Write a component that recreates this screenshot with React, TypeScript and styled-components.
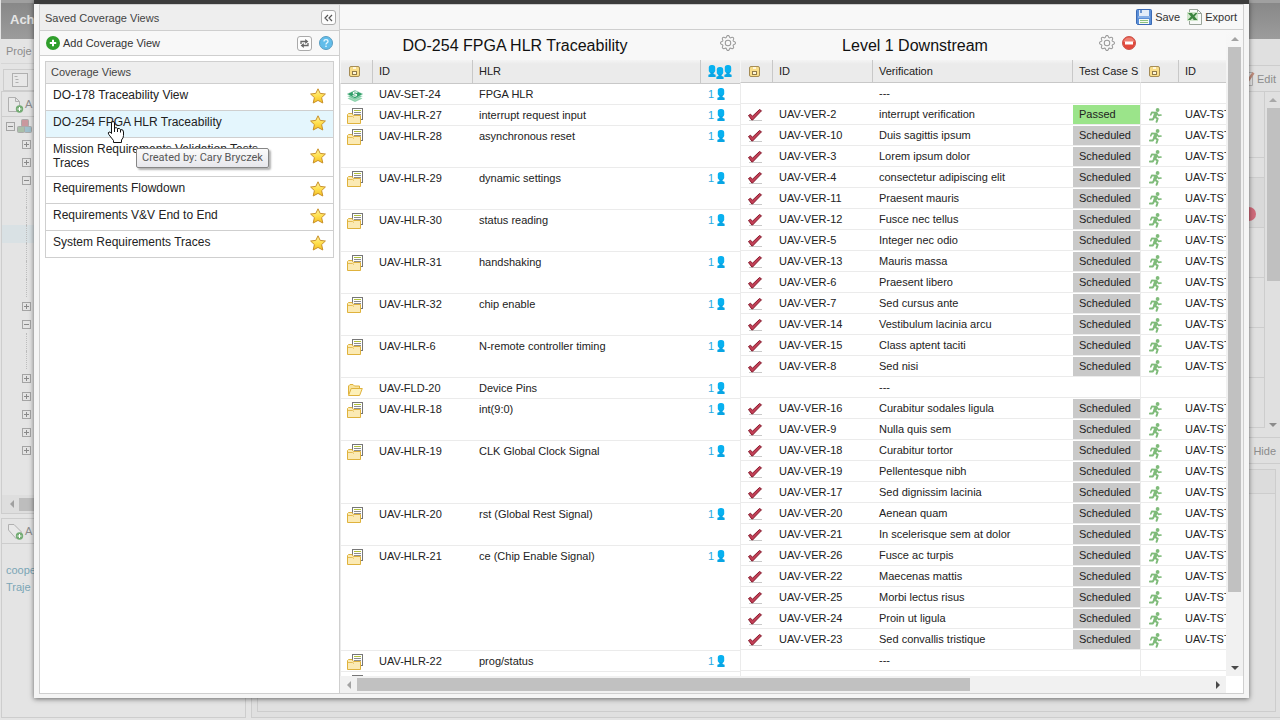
import React from "react";
import styled, { createGlobalStyle } from "styled-components";
import { BsGear } from "react-icons/bs";

const GlobalStyle = createGlobalStyle`
  *, *::before, *::after { box-sizing: border-box; }
  body {
    margin: 0;
    background: #e4e4e4;
    color: #222;
    font-family: "Liberation Sans", Arial, sans-serif;
    font-size: 11px;
    line-height: 14px;
  }
  button {
    margin: 0;
    padding: 0;
    border: 0;
    background: none;
    color: inherit;
    font: inherit;
    text-align: left;
  }
  svg { display: block; flex: none; }
`;

const rule = "#cfcfcf";
const faint = "#cdcdcd";

/* ---------- application behind the dialog ---------- */

const Page = styled.div`
  position: relative;
  display: flex;
  flex-direction: column;
  height: 100vh;
  min-height: 480px;
  overflow: hidden;
`;

const Banner = styled.header`
  flex: none;
  height: 39px;
  margin-left: 1px;
  padding: 13px 0 0 9px;
  background: linear-gradient(#a0a0a0, #a0a0a0 3px, #888 3px, #9c9c9c);
  color: #e6e6e6;
  font-size: 13px;
  font-weight: bold;
`;

const Workspace = styled.div`
  flex: 1;
  display: flex;
  gap: 5px;
  min-height: 0;
  padding: 0 0 2px 1px;
  color: #8c8c8c;
`;

const NavColumn = styled.div`
  flex: none;
  display: flex;
  flex-direction: column;
  width: 245px;
`;

const NavTitle = styled.div`
  flex: none;
  height: 25px;
  margin-bottom: 5px;
  padding: 5px;
  border-bottom: 1px solid #d6d6d6;
`;

const NavTab = styled.div`
  flex: none;
  height: 22px;
  margin-left: 2px;
  padding: 3px 8px;
  border: 1px solid ${faint};
`;

const NavPanel = styled.section<{ $fixed?: boolean }>`
  display: flex;
  flex-direction: column;
  flex: ${(p) => (p.$fixed ? "0 0 200px" : "1 1 0")};
  min-height: 0;
  margin-bottom: ${(p) => (p.$fixed ? "0" : "4px")};
  border: 1px solid ${faint};
  overflow: hidden;
`;

const NavTools = styled.div`
  flex: none;
  display: flex;
  align-items: center;
  gap: 1px;
  height: 25px;
  padding-left: 5px;
  border-bottom: 1px solid ${faint};
`;

const Tree = styled.ul`
  flex: 1;
  min-height: 0;
  margin: 0;
  padding: 0;
  list-style: none;
  overflow: hidden;
`;

const TreeRow = styled.li<{ $root?: boolean; $lit?: boolean }>`
  display: flex;
  align-items: center;
  gap: 2px;
  height: 18px;
  padding-left: ${(p) => (p.$root ? "4px" : "20px")};
  background: ${(p) => (p.$lit ? "#d9e1e4" : "transparent")};
`;

const Expander = styled.button<{ $open?: boolean }>`
  position: relative;
  width: 9px;
  height: 9px;
  border: 1px solid #a4a4a4;
  &::before, &::after {
    content: "";
    position: absolute;
    background: #8a8a8a;
  }
  &::before { left: 1px; top: 3px; width: 5px; height: 1px; }
  &::after { left: 3px; top: 1px; width: 1px; height: ${(p) => (p.$open ? "0" : "5px")}; }
`;

const TreeLine = styled.span`
  width: 1px;
  height: 18px;
  margin-left: 4px;
  border-left: 1px dotted #bcbcbc;
`;

const NavScroll = styled.div`
  flex: none;
  display: flex;
  align-items: center;
  gap: 3px;
  height: 18px;
  padding-left: 6px;
  background: #dedede;
  &::after { content: ""; flex: 1; height: 13px; background: #bdbdbd; }
`;

const TagLinks = styled.nav`
  display: flex;
  flex-direction: column;
  gap: 3px;
  padding: 19px 4px;
  a { color: #7ba6b6; text-decoration: none; }
`;

const DetailColumn = styled.div`
  flex: 1;
  display: flex;
  flex-direction: column;
  min-width: 0;
  border: 1px solid ${faint};
  border-width: 0 0 1px 1px;
  background: #e0e0e0;
`;

const DetailTools = styled.div`
  flex: none;
  display: flex;
  align-items: center;
  justify-content: flex-end;
  height: 26px;
  padding-right: 4px;
  border-bottom: 1px solid ${faint};
`;

const DetailSpacer = styled.div`
  flex: none;
  height: 27px;
  border-bottom: 1px solid ${faint};
`;

const DetailScroll = styled.div`
  flex: none;
  display: flex;
  height: 346px;
  border-bottom: 1px solid ${faint};
`;

const Activity = styled.div`
  flex: 1;
  display: flex;
  flex-direction: column;
`;

const ActivityRow = styled.div<{ $height: number; $lit?: boolean }>`
  display: flex;
  align-items: flex-end;
  justify-content: flex-end;
  height: ${(p) => p.$height}px;
  padding: 0 8px 6px 0;
  border-bottom: 1px solid ${faint};
  border-right: 1px solid ${faint};
  background: ${(p) => (p.$lit ? "#d9d9d9" : "transparent")};
`;

const ActivityDot = styled.span`
  width: 14px;
  height: 14px;
  border-radius: 7px;
  background: #cf6a7a;
`;

const ActivityBar = styled.div`
  flex: none;
  display: flex;
  flex-direction: column;
  align-items: center;
  width: 15px;
  padding: 4px 0 8px;
  &::before {
    content: "";
    order: 1;
    width: 13px;
    height: 173px;
    margin: 4px 0 auto 1px;
    background: #c0c0c0;
  }
  svg:last-child { order: 2; }
`;

const CommentBox = styled.div`
  flex: 1;
  margin: 5px 4px 5px 5px;
  border: 1px solid ${faint};
  &::before {
    content: "";
    display: block;
    height: 24px;
    border-bottom: 1px solid ${faint};
    background: #dcdcdc;
  }
`;

const FadedButton = styled.button`
  color: #8c8c8c;
`;

/* ---------- dialog ---------- */

const Dialog = styled.div`
  position: absolute;
  inset: 0 31px 22px 34px;
  display: flex;
  border-top: 4px solid #3c3c3c;
  padding: 0 5px 4px;
  background: #f5f5f5;
  box-shadow: 0 1px 5px rgba(0, 0, 0, 0.55);
`;

const Sidebar = styled.aside`
  flex: none;
  width: 301px;
  border: 1px solid ${rule};
  background: #fff;
`;

const Bar = styled.div<{ $height: number; $heading?: boolean }>`
  flex: none;
  display: flex;
  align-items: center;
  gap: 7px;
  height: ${(p) => p.$height}px;
  padding: ${(p) => (p.$heading ? "0 3px 0 5px" : "0 6px")};
  border-bottom: 1px solid ${rule};
  background: ${(p) => (p.$heading ? "#eee" : "#f8f8f8")};
`;

const BarTitle = styled.h2`
  flex: 1;
  margin: 0;
  font-size: 11px;
  font-weight: normal;
  color: #444;
`;

const SquareButton = styled.button`
  display: flex;
  align-items: center;
  justify-content: center;
  width: 15px;
  height: 15px;
  border: 1px solid #aaa;
  border-radius: 3px;
  background: #fdfdfd;
`;

const TextButton = styled.button<{ $grow?: boolean }>`
  flex: ${(p) => (p.$grow ? "1" : "none")};
  display: flex;
  align-items: center;
  gap: 3px;
  color: #333;
`;

const ViewBox = styled.section`
  margin: 5px;
  border: 1px solid ${rule};
`;

const ViewHeading = styled.h3`
  height: 22px;
  margin: 0;
  padding: 3px 5px;
  border-bottom: 1px solid ${rule};
  background: #eee;
  font-size: 11px;
  font-weight: normal;
  color: #444;
`;

const ViewList = styled.ul`
  margin: 0;
  padding: 0;
  list-style: none;
  li + li { border-top: 1px solid ${rule}; }
`;

const ViewItem = styled.button<{ $active?: boolean }>`
  display: flex;
  align-items: center;
  width: 100%;
  padding: 4px 7px 6px;
  background: ${(p) => (p.$active ? "#e4f6fd" : "#fff")};
  font-size: 12px;
`;

const ViewName = styled.span`
  flex: 1;
  align-self: flex-start;
  padding-right: 32px;
`;

const Main = styled.main`
  flex: 1;
  display: flex;
  flex-direction: column;
  min-width: 0;
  border: 1px solid ${rule};
  border-left: 0;
  background: #fff;
`;

const MainBar = styled(Bar)`
  justify-content: flex-end;
`;

const ScrollFrame = styled.div`
  flex: 1;
  display: grid;
  grid-template-columns: minmax(0, 1fr) 17px;
  grid-template-rows: minmax(0, 1fr) 17px;
  min-height: 0;
`;

const Viewport = styled.div`
  display: flex;
  align-items: flex-start;
  overflow: hidden;
`;

const ScrollColumn = styled.div`
  display: flex;
  flex-direction: column;
  align-items: center;
  background: linear-gradient(#f8f8f8, #f1f1f1 60px);
`;

const ScrollRow = styled.div`
  display: flex;
  align-items: center;
  background: #f1f1f1;
`;

const ArrowButton = styled.button`
  flex: none;
  display: flex;
  align-items: center;
  justify-content: center;
  width: 17px;
  height: 17px;
`;

const TrackY = styled.div`
  flex: 1;
  width: 13px;
  &::before { content: ""; display: block; height: 89%; background: #c1c1c1; }
`;

const TrackX = styled.div`
  flex: 1;
  height: 13px;
  &::before { content: ""; display: block; width: 72%; height: 13px; background: #c1c1c1; }
`;

const Level = styled.section`
  flex: none;
`;

const LevelHead = styled.div`
  display: flex;
  height: 30px;
  background: #f8f8f8;
`;

const LevelTitle = styled.h1`
  flex: 1;
  margin: 0;
  padding-top: 6px;
  font-size: 16px;
  line-height: 20px;
  font-weight: normal;
  text-align: center;
  color: #111;
`;

const LevelActions = styled.div`
  display: flex;
  justify-content: flex-end;
  align-items: center;
  gap: 7px;
  width: 50px;
  height: 26px;
  padding-right: 4px;
  color: #999;
`;

const Grid = styled.table<{ $first?: boolean }>`
  width: 400px;
  table-layout: fixed;
  border-collapse: separate;
  border-spacing: 0;
  th, td {
    padding: 0 0 0 6px;
    text-align: left;
    vertical-align: top;
    white-space: nowrap;
    overflow: hidden;
    line-height: 20px;
    font-weight: normal;
  }
  th {
    height: ${(p) => (p.$first ? "24px" : "23px")};
    border-right: 1px solid #c8c8c8;
    border-bottom: 1px solid #c8c8c8;
    background: linear-gradient(#f4f4f4, #ebebeb 4px);
    line-height: 22px;
  }
  th:last-child { border-right: 0; }
  td { border-bottom: 1px solid #ebebeb; }
  td:first-child { border-left: 1px solid #ebebeb; }
  th:first-child { border-left: 1px solid #f6f6f6; }
`;

const Row = styled.tr<{ $span?: number }>`
  height: ${(p) => (p.$span ?? 1) * 21}px;
`;

const IconSlot = styled.span<{ $head?: boolean }>`
  display: block;
  padding-top: ${(p) => (p.$head ? "4px" : "3px")};
  height: 20px;
`;

const People = styled.span`
  display: flex;
  align-items: center;
  gap: 3px;
  height: 20px;
  padding-left: 1px;
  color: #27a9e1;
`;

const PeopleHead = styled.span`
  display: flex;
  height: 22px;
  padding: 5px 0 0 1px;
  svg:nth-child(2) { margin-top: 2px; }
`;

const Status = styled.span<{ $passed?: boolean }>`
  display: block;
  height: 19px;
  margin: 1px 0 0 -6px;
  padding-left: 6px;
  background: ${(p) => (p.$passed ? "#9be48a" : "#c9c9c9")};
  line-height: 18px;
`;

const Tooltip = styled.div`
  position: absolute;
  left: 136px;
  top: 148px;
  height: 20px;
  padding: 2px 5px;
  border: 1px solid #868686;
  border-radius: 2px;
  background: linear-gradient(#fbfbfb, #e7e7ec);
  box-shadow: 2px 2px 2px rgba(0, 0, 0, 0.3);
  color: #575757;
  font-family: Roboto, sans-serif;
  font-size: 11px;
  white-space: nowrap;
`;

const Pointer = styled.svg`
  position: absolute;
  left: 106px;
  top: 120px;
  pointer-events: none;
`;

/* ---------- icons ---------- */

const Star = () => (
  <svg width="16" height="16" viewBox="0 0 16 16" aria-hidden="true">
    <defs>
      <linearGradient id="starFill" x1="0" y1="0" x2="0" y2="1">
        <stop offset="0" stopColor="#fff3a6" />
        <stop offset="0.5" stopColor="#ffe04f" />
        <stop offset="1" stopColor="#f5bf22" />
      </linearGradient>
    </defs>
    <path
      d="M8 0.8 L10.2 5.4 L15.4 6 L11.6 9.6 L12.8 15 L8 12.4 L3.2 15 L4.4 9.6 L0.6 6 L5.8 5.4 Z"
      fill="url(#starFill)"
      stroke="#c9912a"
      strokeLinejoin="round"
    />
  </svg>
);

const AddCircle = () => (
  <svg width="14" height="14" viewBox="0 0 14 14" aria-hidden="true">
    <circle cx="7" cy="7" r="7" fill="#2f9e2b" />
    <path d="M7 3.8 V10.2 M3.8 7 H10.2" stroke="#fff" strokeWidth="2" />
  </svg>
);

const HelpCircle = () => (
  <svg width="14" height="14" viewBox="0 0 14 14" aria-hidden="true">
    <circle cx="7" cy="7" r="6.5" fill="#62bdea" stroke="#5a9cc0" />
    <path d="M5 5.4 C5 3 9 3 9 5.4 C9 6.8 7 6.8 7 8.6" fill="none" stroke="#e8f7ff" strokeWidth="1.3" />
    <rect x="6.3" y="9.6" width="1.4" height="1.4" fill="#e8f7ff" />
  </svg>
);

const Chevrons = () => (
  <svg width="9" height="8" viewBox="0 0 9 8" aria-hidden="true">
    <path d="M4 1 L1 4 L4 7 M8 1 L5 4 L8 7" fill="none" stroke="#555" strokeWidth="1.2" />
  </svg>
);

const Swap = () => (
  <svg width="9" height="9" viewBox="0 0 9 9" aria-hidden="true">
    <path d="M1 5 V2.5 H6 M8 4 V6.5 H3" fill="none" stroke="#666" strokeWidth="1.3" />
    <path d="M5.2 0 L8.4 2.5 L5.2 5 Z M3.8 4 L0.6 6.5 L3.8 9 Z" fill="#666" />
  </svg>
);

const Floppy = () => (
  <svg width="16" height="16" viewBox="0 0 16 16" aria-hidden="true">
    <path d="M0.5 1.5 Q0.5 0.5 1.5 0.5 H14.5 Q15.5 0.5 15.5 1.5 V15.5 H1.5 L0.5 14.5 Z" fill="#5b8fd8" stroke="#3a6ab5" />
    <rect x="3" y="1" width="10" height="6" fill="#e3ecf8" />
    <rect x="4" y="1" width="2" height="3" fill="#6b94cf" />
    <rect x="2" y="7" width="12" height="2" fill="#86aee6" />
    <rect x="3" y="10" width="10" height="5" fill="#f7fbf4" />
    <path d="M4 11.5 H12 M4 13.5 H12" stroke="#8cc27e" />
  </svg>
);

const Sheet = () => (
  <svg width="15" height="16" viewBox="0 0 15 16" aria-hidden="true">
    <path d="M2.5 0.5 H10.5 L14.5 4.5 V15.5 H2.5 Z" fill="#f8faf8" stroke="#9aa59a" />
    <path d="M10.5 0.5 V4.5 H14.5" fill="none" stroke="#9aa59a" />
    <rect x="0" y="3" width="11" height="9" fill="#cfe5ca" />
    <path d="M1 4 H5 L6.2 6 L8.5 4 H10.5 L7.5 7.5 L10.5 11 H6.8 L5.4 9.2 L3.5 11 H0.8 L4 7.6 Z" fill="#3c8540" />
  </svg>
);

const RemoveCircle = () => (
  <svg width="14" height="14" viewBox="0 0 14 14" aria-hidden="true">
    <circle cx="7" cy="7" r="6.5" fill="#e2493c" stroke="#c9564c" />
    <path d="M1.5 6 A5.6 5.6 0 0 1 12.5 6 Z" fill="#ee7f72" />
    <rect x="3" y="5.5" width="8" height="3" fill="#fff" />
  </svg>
);

const TypeBadge = () => (
  <svg width="16" height="16" viewBox="0 0 16 16" aria-hidden="true">
    <rect x="2.5" y="2.5" width="10" height="10" rx="1.5" fill="#f9dd88" stroke="#a58c55" />
    <rect x="6" y="3" width="3" height="2" fill="#fff7dc" />
    <rect x="5.5" y="7.5" width="4" height="3" fill="#fff7dc" stroke="#8e7a4c" />
  </svg>
);

const RequirementIcon = () => (
  <svg width="16" height="16" viewBox="0 0 16 16" aria-hidden="true">
    <rect x="5.5" y="0.5" width="10" height="11" fill="#fff" stroke="#777" />
    <path d="M7 2.5 H14" stroke="#b2c23a" />
    <path d="M7 4.5 H14 M7 6.5 H14 M10 8.5 H14" stroke="#8c8c8c" />
    <path d="M0.5 15.5 V6.5 L1.5 5.5 H5 L6.5 7.5 H13.5 V15.5 Z" fill="#fbeab4" stroke="#dfb23c" />
    <path d="M1 8.5 H5.5 L7 9.5" fill="none" stroke="#e5bd52" />
  </svg>
);

const SetIcon = () => (
  <svg width="16" height="16" viewBox="0 0 16 16" aria-hidden="true">
    <path d="M0.5 11.5 L8 15 L15.5 11.5 L8 8.5 Z" fill="#8fd3ad" />
    <path d="M0.5 9.3 L8 13 L15.5 9.3 L8 6.5 Z" fill="#6cc596" stroke="#d7f0e2" strokeWidth="0.5" />
    <path d="M0 7 L8 11.6 L16 7 L8 3.2 Z" fill="#2f9e67" stroke="#d7f0e2" strokeWidth="0.4" />
    <path d="M10.4 5.4 C8.6 4.4 5.8 5 6.4 6.4 C7 7.6 9.8 6.8 9.6 8.2 C9.2 9.6 7 9.2 5.6 8.4" fill="none" stroke="#fff" strokeWidth="1.2" />
  </svg>
);

const FolderIcon = () => (
  <svg width="16" height="16" viewBox="0 0 16 16" aria-hidden="true">
    <path d="M1.5 13.5 V5 L3 3.5 H6 L7.5 5 H12.5 V7.5" fill="#f8e39c" stroke="#dfb23c" />
    <path d="M1.5 14.5 L4.2 7.5 H15.3 L12.6 14.5 Z" fill="#fdf0b8" stroke="#dfb23c" strokeLinejoin="round" />
  </svg>
);

const CheckIcon = () => (
  <svg width="16" height="16" viewBox="0 0 16 16" aria-hidden="true">
    <path d="M2 13.5 H15" stroke="#c9c9c9" />
    <path d="M1.5 8.5 L3.5 7.2 L5.5 9.2 L12.5 2.5 L14.5 3.8 L5.6 13 L4.8 13 Z" fill="#c23f56" stroke="#851a2c" strokeLinejoin="round" />
  </svg>
);

const RunnerIcon = () => (
  <svg width="16" height="16" viewBox="0 0 16 16" aria-hidden="true">
    <circle cx="10.6" cy="3" r="1.9" fill="#7fbb7a" />
    <g fill="none" stroke="#7fbb7a" strokeLinecap="round" strokeLinejoin="round">
      <path d="M9 6.4 L7.8 9.4" strokeWidth="3.4" />
      <path d="M10.2 6.6 L11.4 8.4 L14 8 M8.4 5.6 L4.8 5.4 L3.8 7.8" strokeWidth="1.6" />
      <path d="M8.2 10 L10.6 11.6 L9.6 14.8 M7.2 10 L5.8 12.4 L3 12.6" strokeWidth="2" />
    </g>
  </svg>
);

const Person = () => (
  <svg width="8" height="12" viewBox="0 0 8 12" aria-hidden="true">
    <rect x="0.8" y="0" width="6.4" height="8" rx="2.8" fill="#08b1f0" />
    <path d="M2.4 7 H5.6 V9 L7.6 9.8 V12 H0.4 V9.8 L2.4 9 Z" fill="#08a5e4" />
  </svg>
);

const Triangle = ({ turn = 0, tone = "#4a4a4a" }: { turn?: number; tone?: string }) => (
  <svg width="8" height="8" viewBox="0 0 8 8" aria-hidden="true">
    <path d="M0 6 L4 2 L8 6 Z" fill={tone} transform={`rotate(${turn} 4 4)`} />
  </svg>
);

const PageAdd = ({ tag = false }: { tag?: boolean }) => (
  <svg width="17" height="17" viewBox="0 0 17 17" aria-hidden="true">
    <path
      d={tag ? "M1.5 1.5 H7 L14.5 9 L9 15.5 L1.5 7 Z" : "M1.5 1.5 H8.5 L12.5 5.5 V15.5 H1.5 Z M8.5 1.5 V5.5 H12.5"}
      fill="#e9e9e9"
      stroke="#b0b0b0"
    />
    <circle cx="12.5" cy="13" r="3.7" fill="#74ac74" />
    <path d="M12.5 11 V15 M10.5 13 H14.5" stroke="#fff" />
  </svg>
);

const ListIcon = () => (
  <svg width="16" height="14" viewBox="0 0 16 14" aria-hidden="true">
    <rect x="0.5" y="0.5" width="15" height="13" fill="#e8e8e8" stroke="#b0b0b0" />
    <path d="M2.5 3.5 H5.5 M3.5 6.5 H6.5 M3.5 9.5 H6.5" stroke="#b0b0b0" />
  </svg>
);

const Blocks = () => (
  <svg width="15" height="15" viewBox="0 0 15 15" aria-hidden="true">
    <rect x="4.5" y="0.5" width="7" height="7" rx="1" fill="#c9989e" stroke="#aaa" />
    <rect x="0.5" y="7.5" width="7" height="6" rx="1" fill="#a9bfa9" stroke="#aaa" />
    <rect x="7.5" y="7.5" width="7" height="6" rx="1" fill="#9fbfcb" stroke="#aaa" />
  </svg>
);

const PencilPage = () => (
  <svg width="14" height="15" viewBox="0 0 14 15" aria-hidden="true">
    <path d="M0.5 1.5 H9.5 V14.5 H0.5 Z" fill="#e6e6e6" stroke="#b0b0b0" />
    <path d="M4 9 L9.5 1 L11.5 2.5 L6 10.5 Z" fill="#c08d7c" />
  </svg>
);

/* ---------- data ---------- */

const views = [
  "DO-178 Traceability View",
  "DO-254 FPGA HLR Traceability",
  "Mission Requirements Validation Tests Traces",
  "Requirements Flowdown",
  "Requirements V&V End to End",
  "System Requirements Traces",
];

type Kind = "set" | "folder" | "hlr";

const sources: { id: string; name: string; span: number; kind?: Kind }[] = [
  { id: "UAV-SET-24", name: "FPGA HLR", span: 1, kind: "set" },
  { id: "UAV-HLR-27", name: "interrupt request input", span: 1 },
  { id: "UAV-HLR-28", name: "asynchronous reset", span: 2 },
  { id: "UAV-HLR-29", name: "dynamic settings", span: 2 },
  { id: "UAV-HLR-30", name: "status reading", span: 2 },
  { id: "UAV-HLR-31", name: "handshaking", span: 2 },
  { id: "UAV-HLR-32", name: "chip enable", span: 2 },
  { id: "UAV-HLR-6", name: "N-remote controller timing", span: 2 },
  { id: "UAV-FLD-20", name: "Device Pins", span: 1, kind: "folder" },
  { id: "UAV-HLR-18", name: "int(9:0)", span: 2 },
  { id: "UAV-HLR-19", name: "CLK Global Clock Signal", span: 3 },
  { id: "UAV-HLR-20", name: "rst (Global Rest Signal)", span: 2 },
  { id: "UAV-HLR-21", name: "ce (Chip Enable Signal)", span: 5 },
  { id: "UAV-HLR-22", name: "prog/status", span: 1 },
  { id: "", name: "", span: 1 },
];

const verifications: ([string, string] | null)[] = [
  null,
  ["2", "interrupt verification"],
  ["10", "Duis sagittis ipsum"],
  ["3", "Lorem ipsum dolor"],
  ["4", "consectetur adipiscing elit"],
  ["11", "Praesent mauris"],
  ["12", "Fusce nec tellus"],
  ["5", "Integer nec odio"],
  ["13", "Mauris massa"],
  ["6", "Praesent libero"],
  ["7", "Sed cursus ante"],
  ["14", "Vestibulum lacinia arcu"],
  ["15", "Class aptent taciti"],
  ["8", "Sed nisi"],
  null,
  ["16", "Curabitur sodales ligula"],
  ["9", "Nulla quis sem"],
  ["18", "Curabitur tortor"],
  ["19", "Pellentesque nibh"],
  ["17", "Sed dignissim lacinia"],
  ["20", "Aenean quam"],
  ["21", "In scelerisque sem at dolor"],
  ["26", "Fusce ac turpis"],
  ["22", "Maecenas mattis"],
  ["25", "Morbi lectus risus"],
  ["24", "Proin ut ligula"],
  ["23", "Sed convallis tristique"],
  null,
];

/* "+" and "-" are expanders, "*" is the highlighted row, "" a plain guide line */
const treeRows = ["-", "+", "+", "-", "", "", "*", "", "", "", "+", "-", "", "", "+", "+", "+", "+", "+"];

const kindIcon: Record<Kind, React.ReactNode> = {
  set: <SetIcon />,
  folder: <FolderIcon />,
  hlr: <RequirementIcon />,
};

const TypeHead = () => (
  <th scope="col" aria-label="Type">
    <IconSlot $head><TypeBadge /></IconSlot>
  </th>
);

const Columns = ({ widths }: { widths: number[] }) => (
  <colgroup>
    {widths.map((w, i) => <col key={i} width={w} />)}
  </colgroup>
);

/* ---------- sections ---------- */

function Background() {
  return (
    <>
      <Banner>Ach</Banner>
      <Workspace>
        <NavColumn>
          <NavTitle>Proje</NavTitle>
          <NavTab><ListIcon /></NavTab>
          <NavPanel>
            <NavTools><PageAdd />A</NavTools>
            <Tree>
              {treeRows.map((mark, i) => (
                <TreeRow key={i} $root={i === 0} $lit={mark === "*"}>
                  {mark === "+" || mark === "-" ? (
                    <Expander $open={mark === "-"} aria-label={mark === "-" ? "Collapse" : "Expand"} />
                  ) : (
                    <TreeLine />
                  )}
                  {i === 0 && <Blocks />}
                </TreeRow>
              ))}
            </Tree>
            <NavScroll><Triangle turn={-90} tone="#a0a0a0" /></NavScroll>
          </NavPanel>
          <NavPanel $fixed>
            <NavTools><PageAdd tag />A</NavTools>
            <TagLinks>
              <a href="#coope">coope</a>
              <a href="#traje">Traje</a>
            </TagLinks>
          </NavPanel>
        </NavColumn>
        <DetailColumn>
          <DetailSpacer />
          <DetailTools><PencilPage /><FadedButton>Edit</FadedButton></DetailTools>
          <DetailScroll>
            <Activity>
              <ActivityRow $height={66} />
              <ActivityRow $height={20} />
              <ActivityRow $height={50} $lit><ActivityDot /></ActivityRow>
              <ActivityRow $height={50} />
              <ActivityRow $height={50} />
              <ActivityRow $height={50} />
              <ActivityRow $height={50} />
            </Activity>
            <ActivityBar>
              <Triangle tone="#a8a8a8" />
              <Triangle turn={180} tone="#8c8c8c" />
            </ActivityBar>
          </DetailScroll>
          <DetailTools><FadedButton>Hide</FadedButton></DetailTools>
          <CommentBox />
        </DetailColumn>
      </Workspace>
    </>
  );
}

function SavedViews() {
  return (
    <Sidebar>
      <Bar $heading $height={26}>
        <BarTitle>Saved Coverage Views</BarTitle>
        <SquareButton aria-label="Collapse panel"><Chevrons /></SquareButton>
      </Bar>
      <Bar $height={25}>
        <TextButton $grow><AddCircle />Add Coverage View</TextButton>
        <SquareButton aria-label="Refresh"><Swap /></SquareButton>
        <button aria-label="Help"><HelpCircle /></button>
      </Bar>
      <ViewBox>
        <ViewHeading>Coverage Views</ViewHeading>
        <ViewList>
          {views.map((name, i) => (
            <li key={name}>
              <ViewItem $active={i === 1}>
                <ViewName>{name}</ViewName>
                <Star />
              </ViewItem>
            </li>
          ))}
        </ViewList>
      </ViewBox>
    </Sidebar>
  );
}

function SourceLevel() {
  return (
    <Level>
      <LevelHead>
        <LevelTitle>DO-254 FPGA HLR Traceability</LevelTitle>
        <LevelActions>
          <button aria-label="Settings"><BsGear size={16} /></button>
        </LevelActions>
      </LevelHead>
      <Grid $first>
        <Columns widths={[33, 100, 228, 39]} />
        <thead>
          <tr>
            <TypeHead />
            <th scope="col">ID</th>
            <th scope="col">HLR</th>
            <th scope="col" aria-label="Users">
              <PeopleHead><Person /><Person /><Person /></PeopleHead>
            </th>
          </tr>
        </thead>
        <tbody>
          {sources.map((s, i) => (
            <Row key={i} $span={s.span}>
              <td><IconSlot>{kindIcon[s.kind ?? "hlr"]}</IconSlot></td>
              <td>{s.id}</td>
              <td>{s.name}</td>
              <td>{s.id && <People>1<Person /></People>}</td>
            </Row>
          ))}
        </tbody>
      </Grid>
    </Level>
  );
}

function DownstreamLevel() {
  return (
    <Level>
      <LevelHead>
        <LevelTitle>Level 1 Downstream</LevelTitle>
        <LevelActions>
          <button aria-label="Settings"><BsGear size={16} /></button>
          <button aria-label="Remove level"><RemoveCircle /></button>
        </LevelActions>
      </LevelHead>
      <Grid>
        <Columns widths={[33, 100, 200, 67]} />
        <thead>
          <tr>
            <TypeHead />
            <th scope="col">ID</th>
            <th scope="col">Verification</th>
            <th scope="col">Test Case S</th>
          </tr>
        </thead>
        <tbody>
          {verifications.map((v, i) => (
            <Row key={i}>
              <td>{v && <IconSlot><CheckIcon /></IconSlot>}</td>
              <td>{v && `UAV-VER-${v[0]}`}</td>
              <td>{v ? v[1] : "---"}</td>
              <td>{v && <Status $passed={i === 1}>{i === 1 ? "Passed" : "Scheduled"}</Status>}</td>
            </Row>
          ))}
          <Row><td /><td /><td /><td /></Row>
        </tbody>
      </Grid>
    </Level>
  );
}

function TestLevel() {
  return (
    <Level>
      <LevelHead />
      <Grid>
        <Columns widths={[39, 361]} />
        <thead>
          <tr>
            <TypeHead />
            <th scope="col">ID</th>
          </tr>
        </thead>
        <tbody>
          {verifications.map((v, i) => (
            <Row key={i}>
              <td>{v && <IconSlot><RunnerIcon /></IconSlot>}</td>
              <td>{v && "UAV-TST"}</td>
            </Row>
          ))}
          <Row><td /><td /></Row>
        </tbody>
      </Grid>
    </Level>
  );
}

export default function App() {
  return (
    <Page>
      <GlobalStyle />
      <Background />
      <Dialog role="dialog" aria-label="Coverage explorer">
        <SavedViews />
        <Main>
          <MainBar $height={25}>
            <TextButton><Floppy />Save</TextButton>
            <TextButton><Sheet />Export</TextButton>
          </MainBar>
          <ScrollFrame>
            <Viewport>
              <SourceLevel />
              <DownstreamLevel />
              <TestLevel />
            </Viewport>
            <ScrollColumn>
              <ArrowButton aria-label="Scroll up"><Triangle tone="#a3a3a3" /></ArrowButton>
              <TrackY />
              <ArrowButton aria-label="Scroll down"><Triangle turn={180} /></ArrowButton>
            </ScrollColumn>
            <ScrollRow>
              <ArrowButton aria-label="Scroll left"><Triangle turn={-90} tone="#a3a3a3" /></ArrowButton>
              <TrackX />
              <ArrowButton aria-label="Scroll right"><Triangle turn={90} /></ArrowButton>
            </ScrollRow>
          </ScrollFrame>
        </Main>
      </Dialog>
      <Tooltip role="tooltip">Created by: Cary Bryczek</Tooltip>
      <Pointer width="20" height="24" viewBox="0 0 20 24" aria-hidden="true">
        <path
          d="M5.5 12 V3 Q5.5 1.5 7 1.5 Q8.5 1.5 8.5 3 V8 Q10.5 7 11.5 8.5 Q13.5 8 14.5 9.5 Q17.5 9.2 17.5 12 V15.5 Q17.5 18 15.5 20 V22.5 H7.5 V20.5 L2.8 14.5 Q1.5 12.5 3 12 Q4 11.5 5.5 13.5 Z"
          fill="#fff"
          stroke="#111"
        />
        <path d="M8.5 8 V12 M11.5 8.8 V12 M14.5 9.8 V12.5" stroke="#111" />
      </Pointer>
    </Page>
  );
}
